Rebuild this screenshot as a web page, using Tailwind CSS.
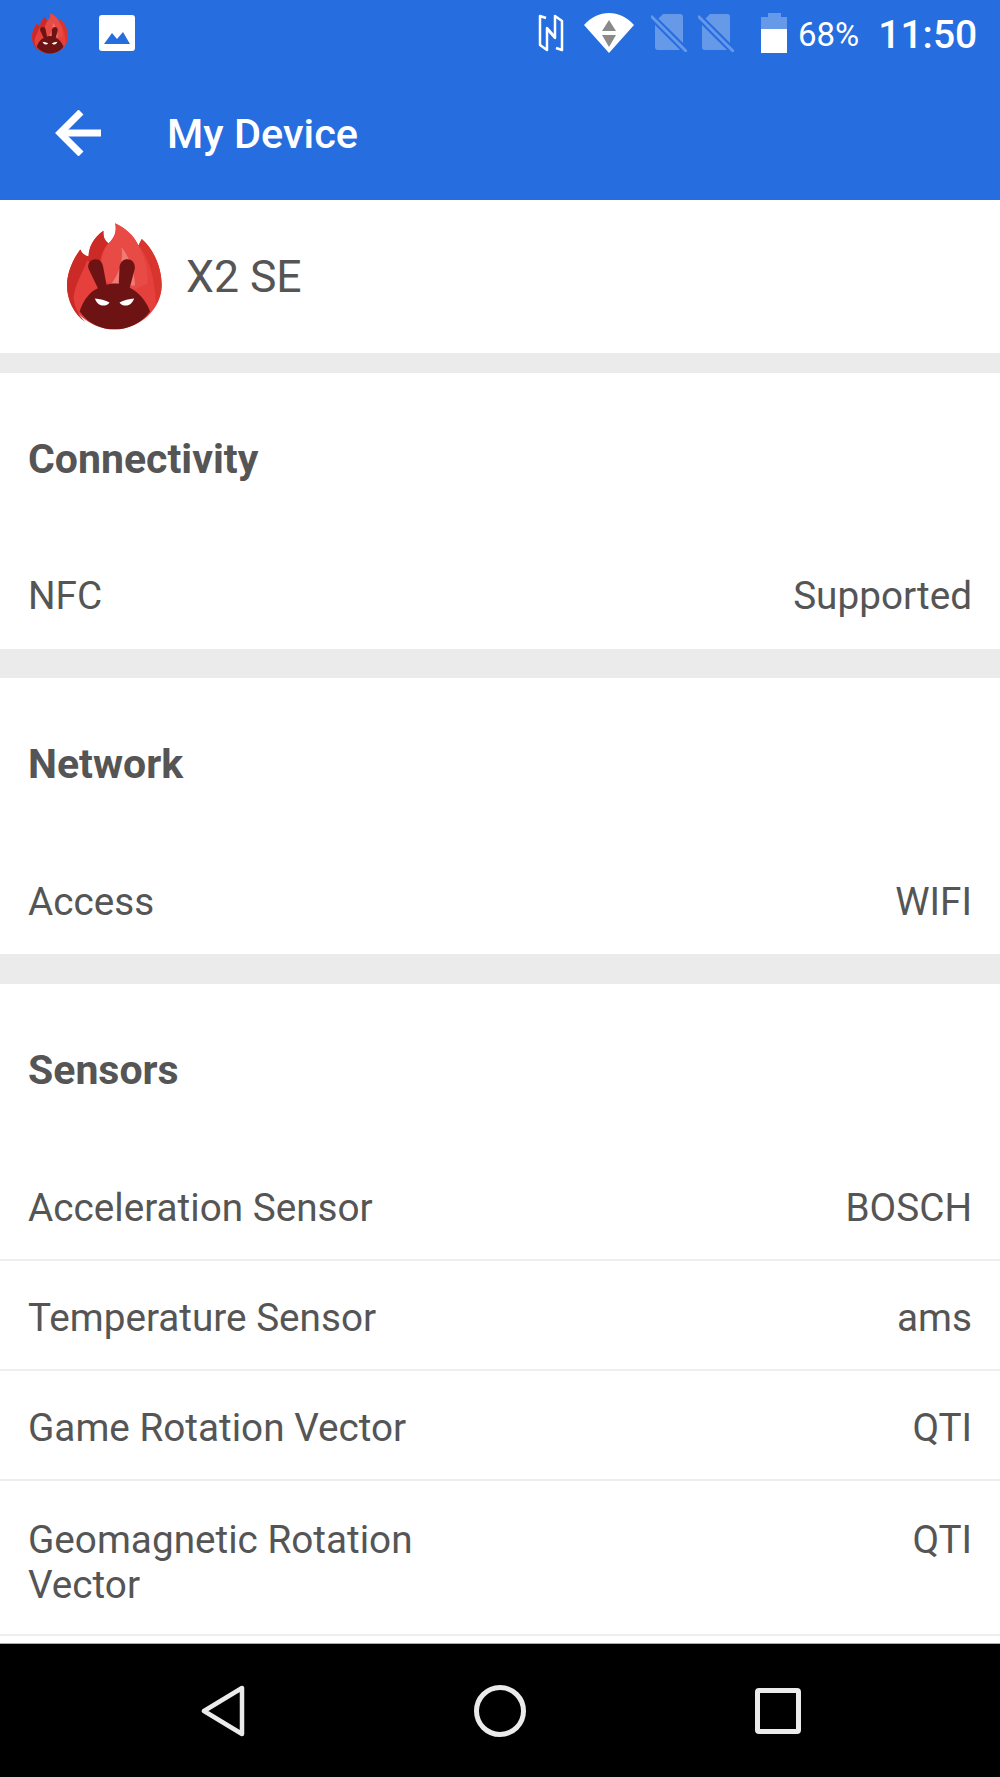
<!DOCTYPE html>
<html lang="en">
<head>
    <meta charset="UTF-8">
    <meta name="viewport" content="width=device-width, initial-scale=1.0">
    <title>My Device</title>
    <script src="https://cdn.jsdelivr.net/npm/@tailwindcss/browser@4"></script>
</head>
<body class="bg-white">
    <svg width="0" height="0" class="absolute">
        <symbol id="logo" viewBox="20 18 286 320">
            <path fill="#e5403b" d="M163 337C85 337 20 275 20 205C20 170 35 130 60 97C65 108 72 115 85 118C85 90 100 60 130 40C128 60 135 72 145 78C165 60 170 38 165 18C195 32 222 55 235 85L245 65C280 95 305 150 305 205C305 275 240 337 163 337Z"/>
            <path fill="#cc2a26" d="M60 97C65 108 72 115 85 118C85 90 100 60 130 40C128 60 135 72 145 78C128 95 120 120 118 150L80 130C70 165 45 195 40 240C40 265 55 295 75 315C40 290 20 250 20 205C20 170 35 130 60 97Z"/>
            <path fill="#e84a45" d="M165 18C195 32 222 55 235 85C250 110 265 150 262 200L215 220L125 190C115 150 125 105 145 78C165 60 170 38 165 18Z"/>
            <path fill="#d8352f" d="M245 65C280 95 305 150 305 205C305 225 298 245 288 262C285 205 275 130 235 85Z"/>
            <path fill="#ef7b75" d="M184 90C205 115 222 155 225 205L150 205C170 180 192 135 184 90Z"/>
            <path fill="#6d1314" d="M58 283C68 250 90 222 113 213L85 155C80 138 92 126 106 126C120 126 127 136 129 150L139 203C155 198 170 198 176 200L178 150C180 134 190 126 202 126C218 126 226 140 224 155L209 212C235 225 258 250 270 283C245 318 205 337 163 337C120 337 83 318 58 283Z"/>
            <path fill="#fff" d="M104 244C118 245 136 250 148 256C140 268 122 268 114 260C110 256 106 250 104 244Z"/>
            <path fill="#fff" d="M222 244C208 245 190 250 178 256C186 268 204 268 212 260C216 256 220 250 222 244Z"/>
        </symbol>
    </svg>

    <div class="w-[1000px] h-[1777px] overflow-hidden flex flex-col font-['Roboto',sans-serif] text-[38.7px] text-[#555555]">
        <!-- blue header -->
        <header class="h-[200px] shrink-0 bg-[#266de0] text-white">
            <div class="h-[66px] flex items-center">
                <svg class="ml-[32px] w-[36px] h-[41px]"><use href="#logo"/></svg>
                <svg class="ml-[31px] w-[36px] h-[36px]" viewBox="0 0 36 36">
                    <rect width="36" height="36" rx="3" fill="#fff"/>
                    <path fill="#266de0" d="M5 29L13 18L18 24L24 17L31 29Z"/>
                </svg>
                <svg class="ml-[403px] w-[26px] h-[38px]" viewBox="0 0 26 38" fill="none" stroke="#fff" stroke-width="2.5" stroke-linejoin="round">
                    <path d="M8 4L2 2V31L9 36V14L17 23"/>
                    <path d="M18 34L24 36V7L17 2V24L9 15"/>
                </svg>
                <svg class="ml-[20px] w-[50px] h-[40px]" viewBox="0 0 50 40">
                    <path fill="#fff" d="M0 12C14 -4 36 -4 50 12L25 40Z"/>
                    <path fill="#8a8a8a" d="M25 7L32 18H18Z"/>
                    <path fill="#8a8a8a" d="M25 34L18 22H32Z"/>
                </svg>
                <svg class="ml-[17px] w-[36px] h-[38px]" viewBox="0 0 36 38">
                    <path fill="#fff" fill-opacity=".3" d="M12 0H29C31 0 32 1 32 3V33C32 35 31 36 29 36H7C5 36 4 35 4 33V8Z"/>
                    <path stroke="#266de0" stroke-width="7" d="M0 2L36 38"/>
                    <path stroke="#fff" stroke-opacity=".3" stroke-width="3" d="M0 2L36 38"/>
                </svg>
                <svg class="ml-[11px] w-[36px] h-[38px]" viewBox="0 0 36 38">
                    <path fill="#fff" fill-opacity=".3" d="M12 0H29C31 0 32 1 32 3V33C32 35 31 36 29 36H7C5 36 4 35 4 33V8Z"/>
                    <path stroke="#266de0" stroke-width="7" d="M0 2L36 38"/>
                    <path stroke="#fff" stroke-opacity=".3" stroke-width="3" d="M0 2L36 38"/>
                </svg>
                <svg class="ml-[27px] w-[26px] h-[40px]" viewBox="0 0 26 40">
                    <path fill="#fff" fill-opacity=".3" d="M7 0H20V4H26V16H0V4H7Z"/>
                    <rect y="16" width="26" height="24" fill="#fff"/>
                </svg>
                <span class="ml-[11px] pt-[2px] text-[33px] leading-none">68%</span>
                <span class="ml-[19px] pt-[4px] text-[39px] font-medium leading-none">11:50</span>
            </div>
            <div class="h-[134px] flex items-center">
                <svg class="ml-[55px] w-[46px] h-[46px]" viewBox="0 0 46 46" fill="none" stroke="#fff" stroke-width="7">
                    <path d="M46 23H5"/>
                    <path d="M26 2L5 23L26 44"/>
                </svg>
                <h1 class="ml-[66px] text-[41.5px] font-medium pt-[3px]">My Device</h1>
            </div>
        </header>

        <main class="flex-1 min-h-0 overflow-hidden">
            <div class="h-[153px] flex items-center">
                <svg class="ml-[67px] w-[95px] h-[107px]"><use href="#logo"/></svg>
                <span class="ml-[24px] text-[44.5px] pt-[2px]">X2 SE</span>
            </div>
            <div class="h-[20px] bg-[#ebebeb]"></div>

            <section>
                <h2 class="h-[170px] flex items-center pt-[3px] px-[28px] text-[41px] font-bold">Connectivity</h2>
                <div class="h-[106px] flex justify-between items-center px-[28px]"><span>NFC</span><span>Supported</span></div>
            </section>
            <div class="h-[29px] bg-[#ebebeb]"></div>

            <section>
                <h2 class="h-[172px] flex items-center pt-[2px] px-[28px] text-[41px] font-bold">Network</h2>
                <div class="h-[104px] flex justify-between items-center px-[28px]"><span>Access</span><span>WIFI</span></div>
            </section>
            <div class="h-[30px] bg-[#ebebeb]"></div>

            <section>
                <h2 class="h-[172px] flex items-center pt-[1px] px-[28px] text-[41px] font-bold">Sensors</h2>
                <div class="h-[105px] flex justify-between items-center pt-[1px] px-[28px] border-b-2 border-[#eeeeee]"><span>Acceleration Sensor</span><span>BOSCH</span></div>
                <div class="h-[110px] flex justify-between items-center pt-[6px] px-[28px] border-b-2 border-[#eeeeee]"><span>Temperature Sensor</span><span>ams</span></div>
                <div class="h-[110px] flex justify-between items-center pt-[6px] px-[28px] border-b-2 border-[#eeeeee]"><span>Game Rotation Vector</span><span>QTI</span></div>
                <div class="h-[155px] flex justify-between items-start pt-[36px] px-[28px] border-b-2 border-[#eeeeee] leading-[45px]"><span class="w-[420px]">Geomagnetic Rotation Vector</span><span>QTI</span></div>
            </section>
        </main>

        <!-- nav bar -->
        <nav class="h-[134px] shrink-0 bg-black flex items-center justify-center gap-[229px] pl-[2px] border-t border-[#aaaaaa]">
            <svg class="w-[44px] h-[52px]" viewBox="0 0 44 52" fill="none" stroke="#ebebeb" stroke-width="4.5" stroke-linejoin="round">
                <path d="M41 3V49L3 26Z"/>
            </svg>
            <svg class="w-[52px] h-[52px]" viewBox="0 0 52 52" fill="none" stroke="#ebebeb" stroke-width="5">
                <circle cx="26" cy="26" r="23.5"/>
            </svg>
            <svg class="w-[46px] h-[46px]" viewBox="0 0 46 46" fill="none" stroke="#ebebeb" stroke-width="5" stroke-linejoin="round">
                <rect x="2.5" y="2.5" width="41" height="41" rx="1.5"/>
            </svg>
        </nav>
    </div>
</body>
</html>
